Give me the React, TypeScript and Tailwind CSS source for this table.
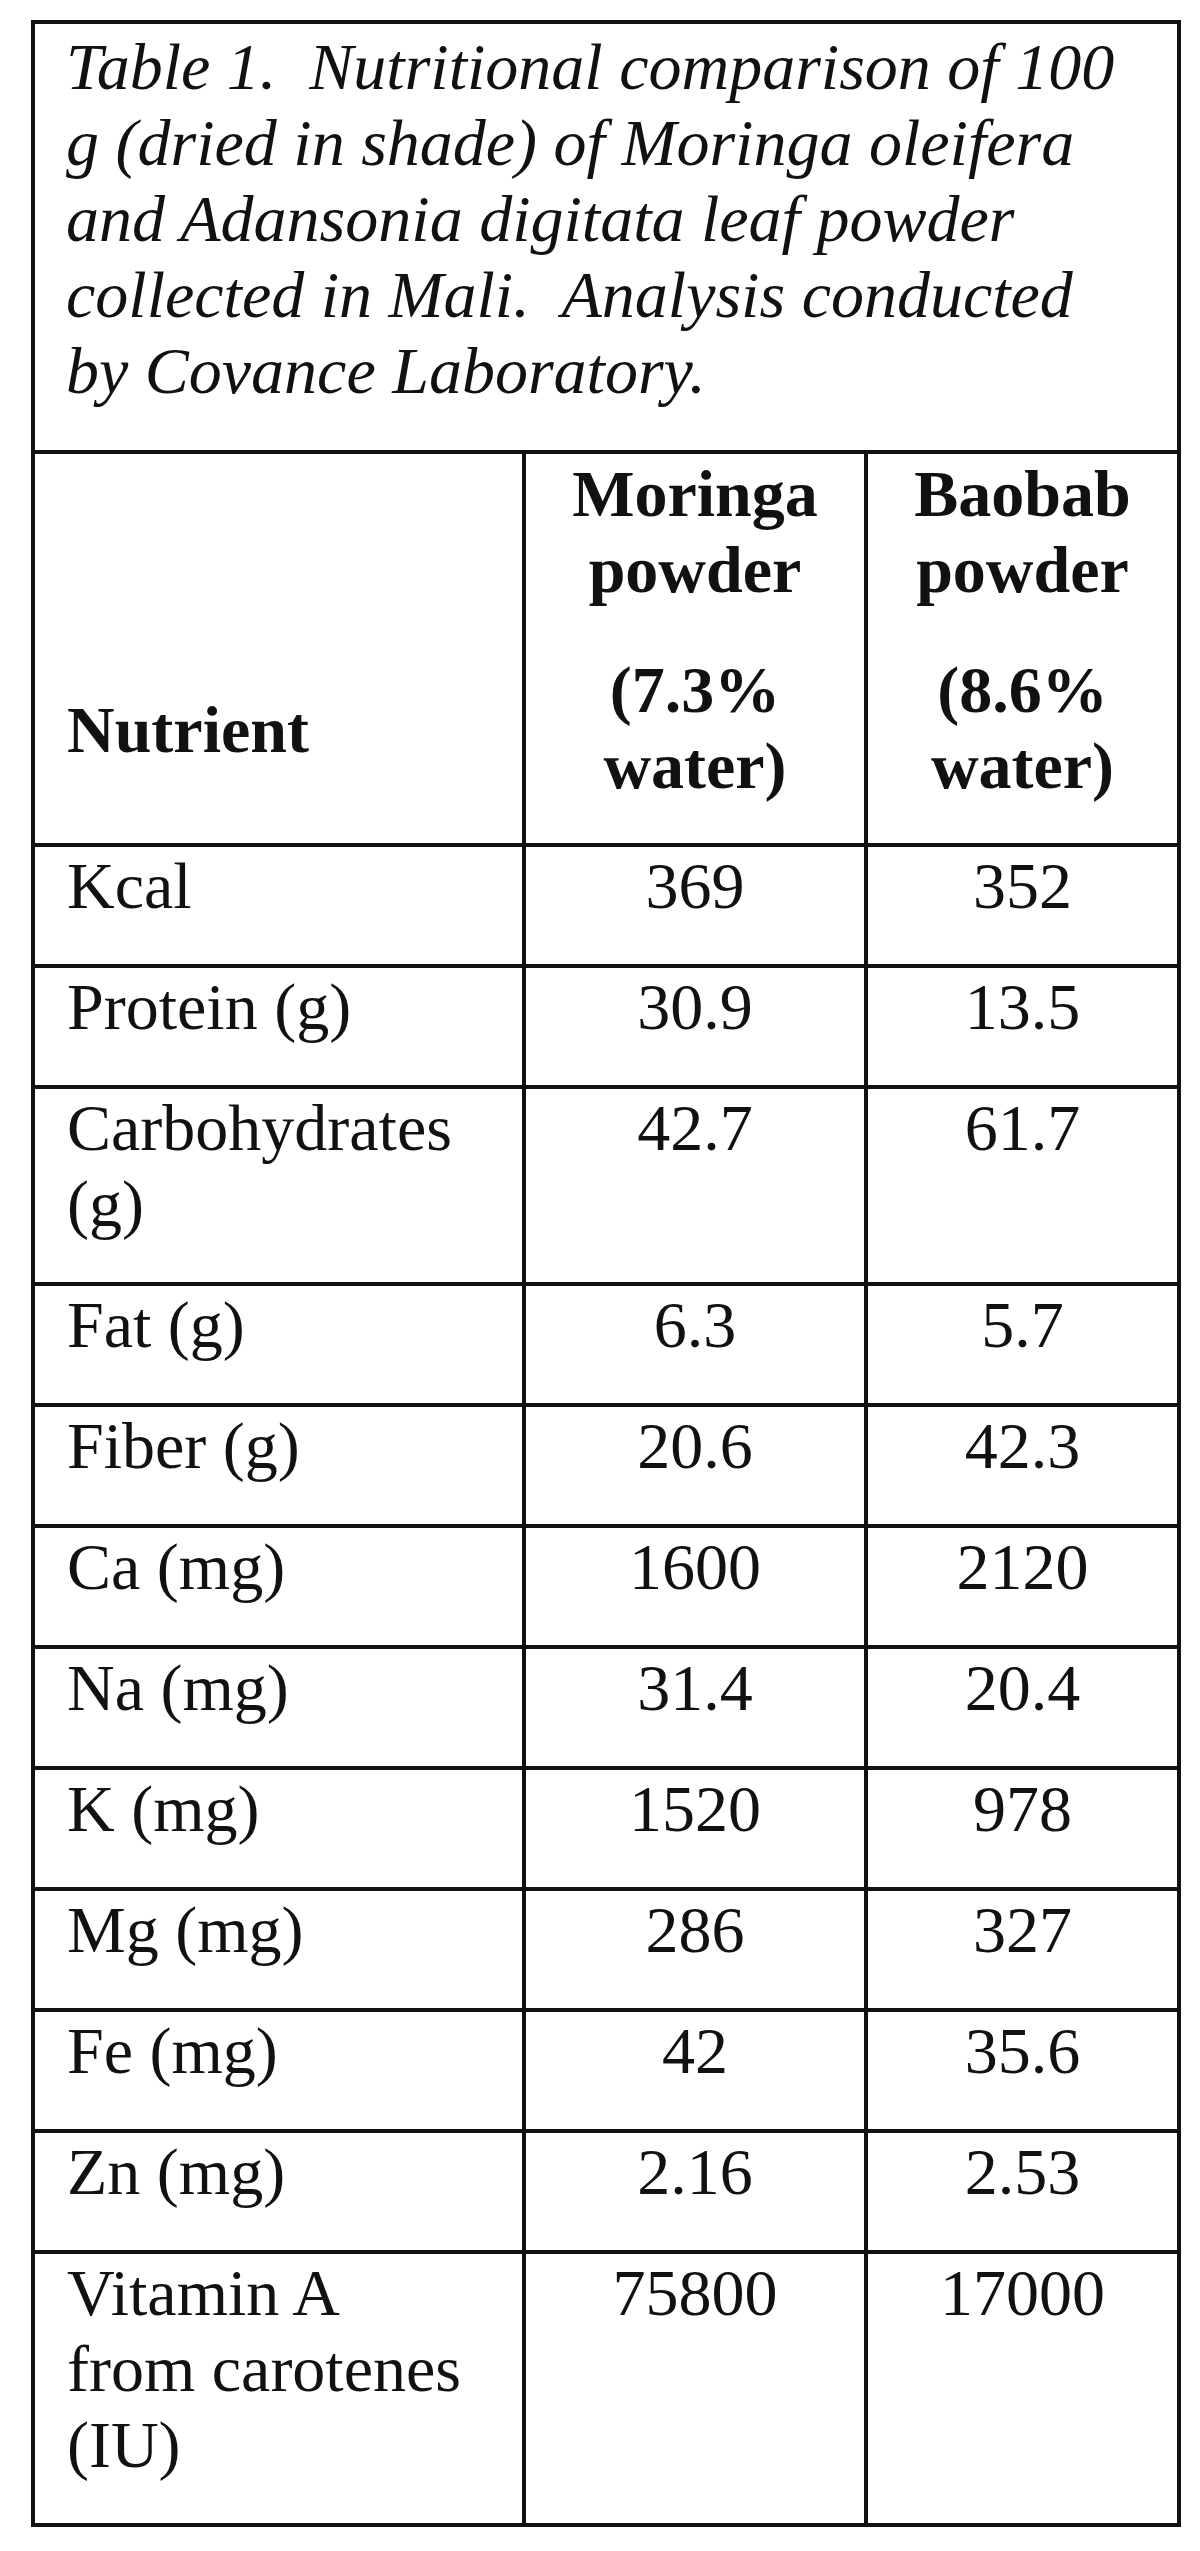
import React from 'react';

interface NutrientRow {
  label: string[];
  moringa: string;
  baobab: string;
}

const caption = [
  'Table 1.  Nutritional comparison of 100',
  'g (dried in shade) of Moringa oleifera',
  'and Adansonia digitata leaf powder',
  'collected in Mali.  Analysis conducted',
  'by Covance Laboratory.',
];

const rows: NutrientRow[] = [
  { label: ['Kcal'], moringa: '369', baobab: '352' },
  { label: ['Protein (g)'], moringa: '30.9', baobab: '13.5' },
  { label: ['Carbohydrates', '(g)'], moringa: '42.7', baobab: '61.7' },
  { label: ['Fat (g)'], moringa: '6.3', baobab: '5.7' },
  { label: ['Fiber (g)'], moringa: '20.6', baobab: '42.3' },
  { label: ['Ca (mg)'], moringa: '1600', baobab: '2120' },
  { label: ['Na (mg)'], moringa: '31.4', baobab: '20.4' },
  { label: ['K (mg)'], moringa: '1520', baobab: '978' },
  { label: ['Mg (mg)'], moringa: '286', baobab: '327' },
  { label: ['Fe (mg)'], moringa: '42', baobab: '35.6' },
  { label: ['Zn (mg)'], moringa: '2.16', baobab: '2.53' },
  {
    label: ['Vitamin A', 'from carotenes', '(IU)'],
    moringa: '75800',
    baobab: '17000',
  },
];

const rowGrid = 'grid grid-cols-[487px_342px_313px] border-t-4 border-[#111]';

const App: React.FC = () => {
  return (
    <div className="min-h-[2551px] w-[1200px] bg-white pt-[20px] font-['Liberation_Serif','Times_New_Roman',serif] text-[66px] leading-[76px] text-[#111]">
      <div className="ml-[31px] w-[1150px] border-4 border-[#111]">
        {/* caption */}
        <div className="px-[31px] pb-[41px] pt-[5px] italic">
          {caption.map((line) => (
            <div key={line} className="whitespace-pre">
              {line}
            </div>
          ))}
        </div>

        {/* header */}
        <div className={rowGrid}>
          <div className="flex flex-col justify-end pb-[75px] pl-[32px] font-bold">
            Nutrient
          </div>
          <div className="border-l-4 border-[#111] pb-[39px] pt-[2px] text-center font-bold">
            <div className="mb-[44px]">
              <div>Moringa</div>
              <div>powder</div>
            </div>
            <div>
              <div>(7.3%</div>
              <div>water)</div>
            </div>
          </div>
          <div className="border-l-4 border-[#111] pb-[39px] pt-[2px] text-center font-bold">
            <div className="mb-[44px]">
              <div>Baobab</div>
              <div>powder</div>
            </div>
            <div>
              <div>(8.6%</div>
              <div>water)</div>
            </div>
          </div>
        </div>

        {/* body */}
        {rows.map((row) => (
          <div key={row.label.join(' ')} className={rowGrid}>
            <div className="pb-[40px] pl-[32px] pt-[1px]">
              {row.label.map((line) => (
                <div key={line} className="whitespace-nowrap">
                  {line}
                </div>
              ))}
            </div>
            <div className="border-l-4 border-[#111] pb-[40px] pt-[1px] text-center">
              {row.moringa}
            </div>
            <div className="border-l-4 border-[#111] pb-[40px] pt-[1px] text-center">
              {row.baobab}
            </div>
          </div>
        ))}
      </div>
    </div>
  );
};

export default App;
